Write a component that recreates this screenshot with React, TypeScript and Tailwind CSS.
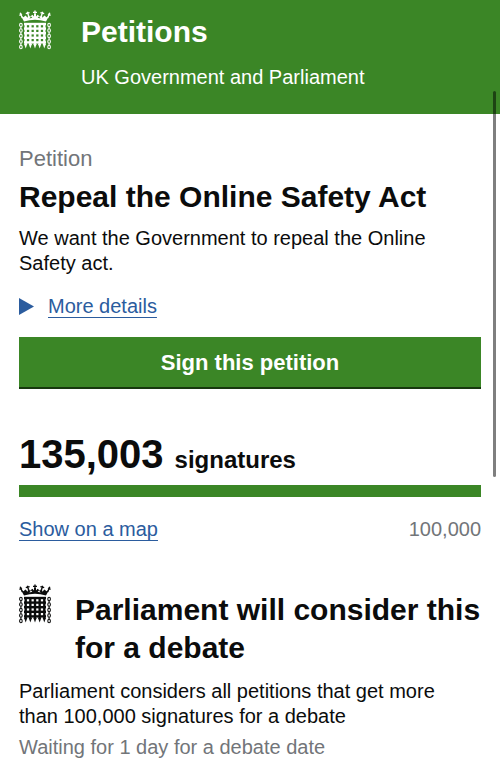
import React from "react";

interface PortcullisProps {
  className?: string;
}

const BARS = [6.7, 11.35, 16, 20.65, 25.3];
const RAILS = [14, 18.6, 23.2, 27.8, 32.4];
const LINKS = [15, 20.5, 26, 31.5, 37];

function Portcullis({ className }: PortcullisProps) {
  return (
    <svg viewBox="0 0 32 40" fill="none" stroke="currentColor" className={className} aria-hidden="true">
      {/* crown */}
      <path
        fill="currentColor"
        fillRule="evenodd"
        stroke="none"
        d="M5 11.6L1.4 5L4.4 7.2L6.6 5.6L8.6 7.8L9.4 4L11 6.8L13.4 4.8L15 6.6V4H17V6.6L18.6 4.8L21 6.8L22.6 4L23.4 7.8L25.4 5.6L27.6 7.2L30.6 5L27 11.6Q16 7.8 5 11.6ZM10.4 8.4L13.4 7.8L12 6.4ZM18.6 7.8L21.6 8.4L20 6.4Z"
      />
      <path strokeWidth="1.4" d="M16 0.6V5M14 2.4H18M3.4 8L1.2 2.8M28.6 8L30.8 2.8M0.4 5.4L3 4M31.6 5.4L29 4M9.4 5.6L8.4 1.8M22.6 5.6L23.6 1.8M6.8 3.6L10.6 2.6M25.2 3.6L21.4 2.6" />
      {/* grille */}
      {BARS.map((x) => (
        <path key={x} strokeWidth="2.4" d={`M${x} 13V35`} />
      ))}
      {RAILS.map((y) => (
        <path key={y} strokeWidth="2.4" d={`M5 ${y}H27`} />
      ))}
      {BARS.map((x) => (
        <path key={x} fill="currentColor" stroke="none" d={`M${x - 1.6} 34H${x + 1.6}L${x} 38.6Z`} />
      ))}
      {/* chains */}
      {LINKS.map((y) => (
        <g key={y} strokeWidth="1.1">
          <ellipse cx="1.9" cy={y} rx="1.3" ry="1.8" />
          <ellipse cx="30.1" cy={y} rx="1.3" ry="1.8" />
          {y < 37 && <path d={`M1.9 ${y + 1.8}v2M30.1 ${y + 1.8}v2`} />}
        </g>
      ))}
    </svg>
  );
}

function Header() {
  return (
    <header className="flex gap-[30px] bg-[#3b8626] px-[19px] pt-[10px] pb-6 text-white">
      <Portcullis className="h-10 w-8 shrink-0" />
      <div>
        <a href="#home" className="block pt-1 text-[30px] leading-9 font-bold">
          Petitions
        </a>
        <p className="mt-[14px] text-xl leading-[26px]">UK Government and Parliament</p>
      </div>
    </header>
  );
}

function SignatureCount() {
  return (
    <section className="mt-[41px]">
      <p className="flex items-baseline gap-[11px] font-bold">
        <span className="text-[40px] leading-[48px]">135,003</span>
        <span className="text-2xl">signatures</span>
      </p>
      <div className="mt-[7px] h-3 bg-[#3b8626]" />
      <div className="mt-5 flex justify-between leading-[25px]">
        <a href="#map" className="text-[#2b5c9e] underline decoration-1 underline-offset-4">
          Show on a map
        </a>
        <span className="text-[#727579]">100,000</span>
      </div>
    </section>
  );
}

function DebateStatus() {
  return (
    <section className="mt-[42px]">
      <div className="flex gap-6">
        <Portcullis className="h-10 w-8 shrink-0" />
        <h2 className="pt-[7px] text-[30px] leading-[38px] font-bold">Parliament will consider this for a debate</h2>
      </div>
      <p className="mt-3 pr-6">Parliament considers all petitions that get more than 100,000 signatures for a debate</p>
      <p className="mt-[6px] text-[#727579]">Waiting for 1 day for a debate date</p>
    </section>
  );
}

export default function App() {
  return (
    <div className="relative bg-white font-['Liberation_Sans',Arial,sans-serif] text-[#0b0c0c]">
      <Header />
      <main className="px-[19px] pt-8 pb-3 text-xl leading-[25px]">
        <h1>
          <span className="block text-[22px] leading-[26px] text-[#727579]">Petition</span>
          <span className="mt-[6px] block text-[30px] leading-[38px] font-bold">Repeal the Online Safety Act</span>
        </h1>
        <p className="mt-[10px] pr-6">We want the Government to repeal the Online Safety act.</p>
        <details className="mt-[18px] text-[#2b5c9e]">
          <summary className="flex cursor-pointer list-none items-center gap-[14px]">
            <svg viewBox="0 0 15 17" className="h-[17px] w-[15px]" fill="currentColor" aria-hidden="true">
              <path d="M0 0L15 8.5L0 17Z" />
            </svg>
            <span className="underline decoration-1 underline-offset-4">More details</span>
          </summary>
        </details>
        <button
          type="button"
          className="mt-[18px] block h-[52px] w-full cursor-pointer border-b-2 border-[#17390e] bg-[#3b8626] text-[22px] font-bold text-white"
        >
          Sign this petition
        </button>
        <SignatureCount />
        <DebateStatus />
      </main>
      {/* scroll indicator */}
      <div className="absolute top-[91px] right-1 h-[386px] w-[3px] rounded-full bg-black/50" />
    </div>
  );
}
